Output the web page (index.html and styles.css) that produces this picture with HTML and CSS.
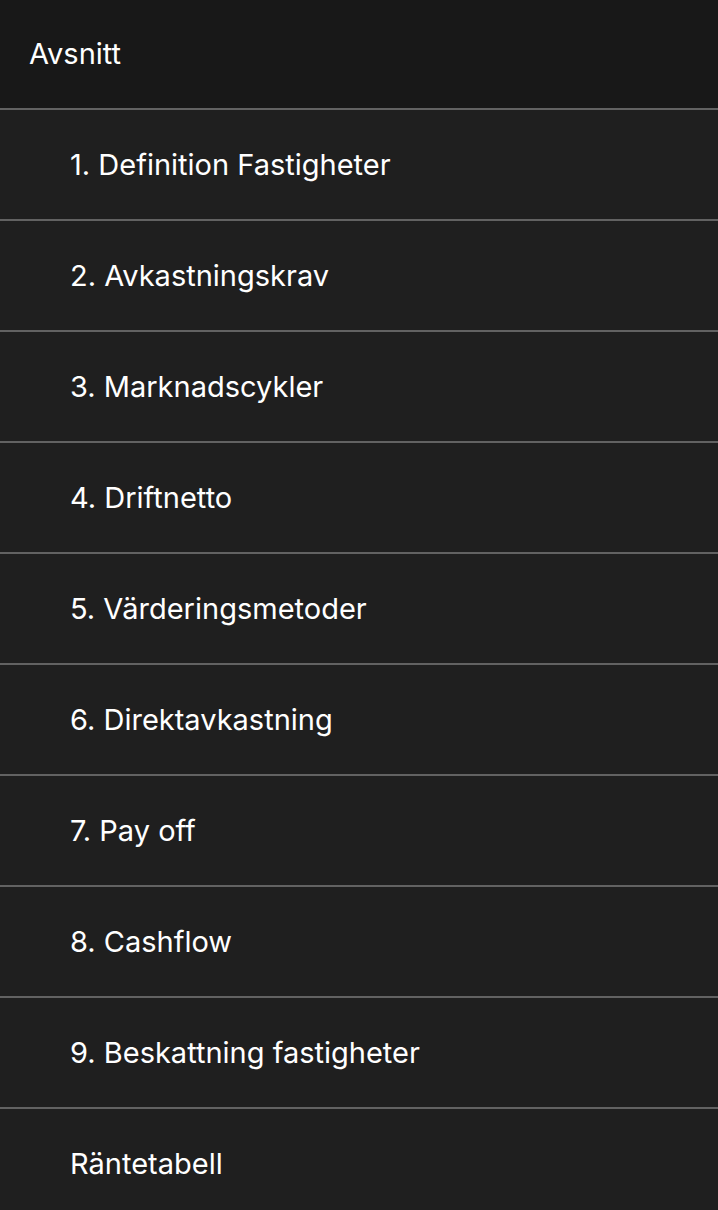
FILE: index.html
```html
<!DOCTYPE html>
<html lang="sv">
<head>
<meta charset="utf-8">
<title>Avsnitt</title>
<link rel="stylesheet" href="styles.css">
</head>
<body>
<nav class="sections">
  <header class="sections-header">Avsnitt</header>
  <ul class="section-list">
    <li class="section-item">1. Definition Fastigheter</li>
    <li class="section-item">2. Avkastningskrav</li>
    <li class="section-item">3. Marknadscykler</li>
    <li class="section-item">4. Driftnetto</li>
    <li class="section-item">5. Värderingsmetoder</li>
    <li class="section-item">6. Direktavkastning</li>
    <li class="section-item">7. Pay off</li>
    <li class="section-item">8. Cashflow</li>
    <li class="section-item">9. Beskattning fastigheter</li>
    <li class="section-item">Räntetabell</li>
  </ul>
</nav>
</body>
</html>
```

FILE: styles.css
```css
html, body {
  margin: 0;
  padding: 0;
  background: #1f1f1f;
}
body {
  font-family: Inter, "Noto Sans", sans-serif;
  color: #ffffff;
  overflow: hidden;
}
.sections-header {
  height: 110px;
  box-sizing: border-box;
  background: #181818;
  display: flex;
  align-items: center;
  padding-left: 29px;
  padding-bottom: 2px;
  font-size: 29px;
  border-bottom: 2px solid #626262;
}
.section-list {
  list-style: none;
  margin: 0;
  padding: 0;
}
.section-item {
  height: 111px;
  box-sizing: border-box;
  display: flex;
  align-items: center;
  padding-left: 70px;
  font-size: 29px;
  border-bottom: 2px solid #626262;
  background: #1f1f1f;
}
```
